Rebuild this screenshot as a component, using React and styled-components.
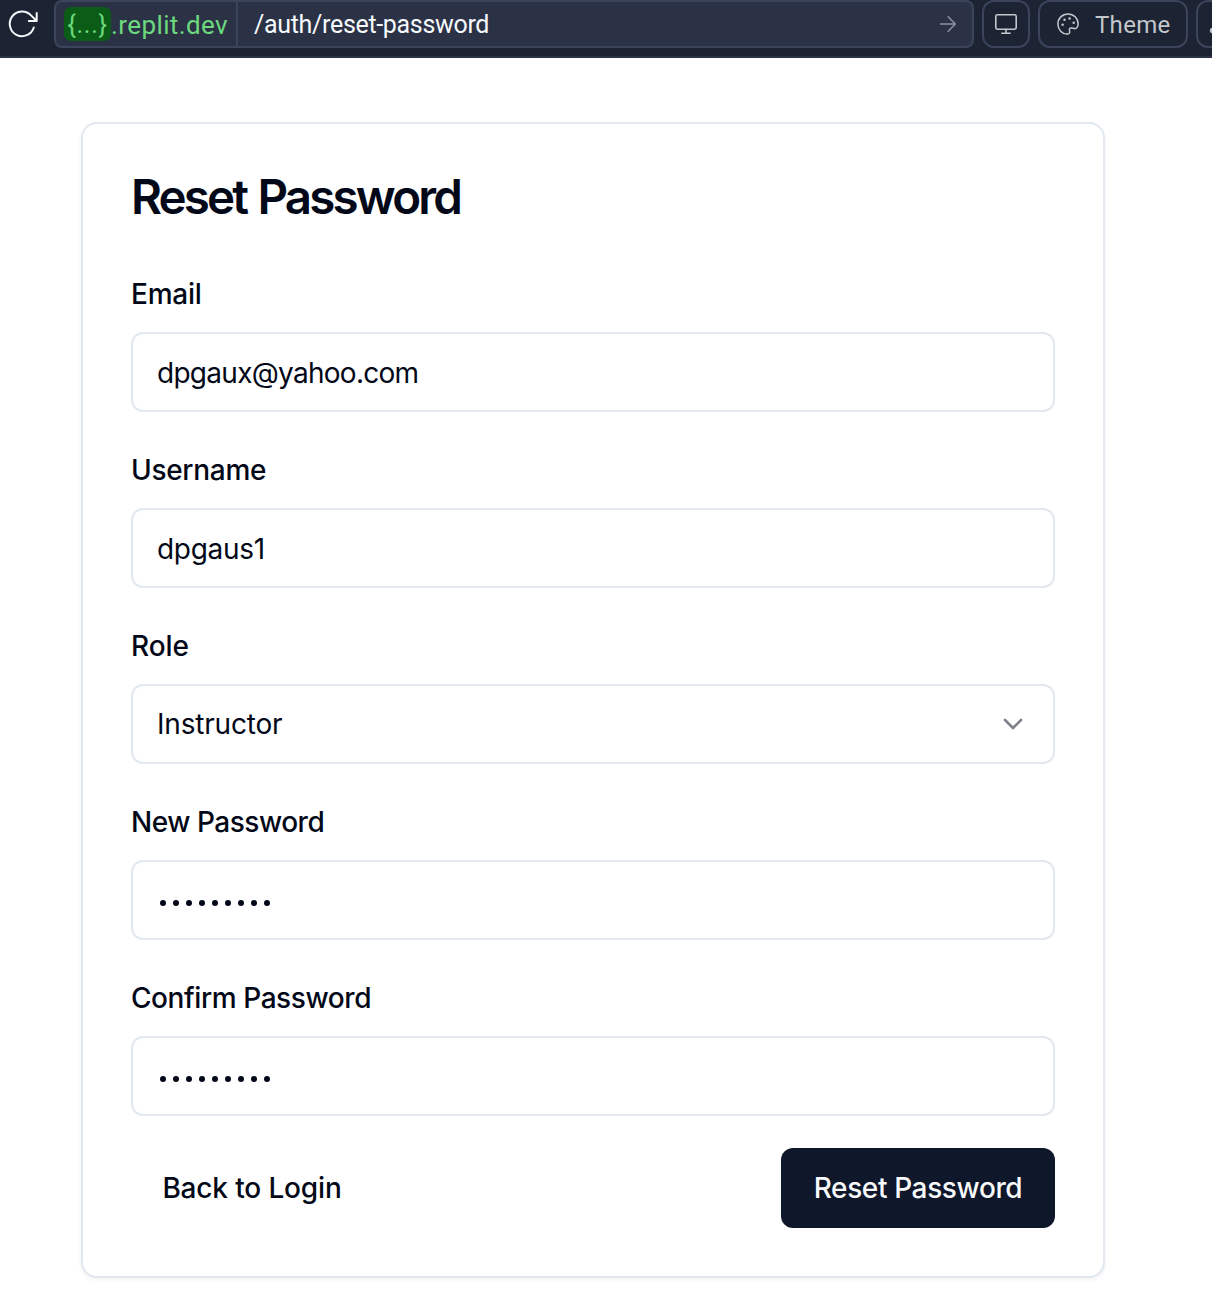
import React from "react";
import styled, { createGlobalStyle } from "styled-components";

const GlobalStyle = createGlobalStyle`
  *, *::before, *::after { box-sizing: border-box; }
  body {
    margin: 0;
    background: #ffffff;
    color: #020817;
    font-family: Inter, "Liberation Sans", sans-serif;
    overflow: hidden;
  }
`;

const Page = styled.div`
  display: flex;
  flex-direction: column;
  height: 1296px;
  overflow: hidden;
`;

const Toolbar = styled.header`
  display: flex;
  flex: none;
  gap: 8px;
  height: 58px;
  padding-bottom: 8px;
  overflow: hidden;
  background: #1c2333;
  border-bottom: 2px solid #2b3245;
`;

const ReloadButton = styled.button`
  flex: none;
  width: 46px;
  height: 48px;
  padding: 0;
  border: 0;
  background: none;
  color: #f5f9fc;
  svg { display: block; }
`;

const AddressBar = styled.div`
  display: flex;
  flex: none;
  align-items: center;
  width: 920px;
  height: 48px;
  border: 2px solid #3c445c;
  border-radius: 8px;
  background: #2b3245;
  font-family: Roboto, "Liberation Sans", sans-serif;
  font-size: 25px;
  line-height: 44px;
`;

const Host = styled.div`
  display: flex;
  align-items: center;
  width: 182px;
  height: 44px;
  padding-left: 8px;
  border-right: 2px solid #3c445c;
  color: #6cd97e;
  white-space: nowrap;
`;

const HostChip = styled.span`
  flex: none;
  width: 47px;
  height: 34px;
  border-radius: 7px;
  background: #0a5c17;
  text-align: center;
  line-height: 36px;
  letter-spacing: ${(p) => p.$spacing};
`;

const HostName = styled.span`
  padding-top: 2px;
  font-size: 26px;
  letter-spacing: ${(p) => p.$spacing};
`;

const Path = styled.div`
  flex: 1;
  padding: 2px 0 0 16px;
  color: #f5f9fc;
  letter-spacing: ${(p) => p.$spacing};
`;

const GoIcon = styled.span`
  width: 24px;
  height: 24px;
  margin-right: 12px;
  color: #8d949e;
  svg { display: block; }
`;

const ToolButton = styled.button`
  display: flex;
  flex: none;
  align-items: center;
  gap: 15px;
  width: ${(p) => p.$width}px;
  height: 48px;
  padding: 0 0 0 ${(p) => p.$inset}px;
  border: 2px solid #3c445c;
  border-radius: 12px;
  background: #1c2333;
  color: #c2c8cc;
  font: 400 24px/44px Roboto, "Liberation Sans", sans-serif;
  letter-spacing: 0.3px;
`;

const ToolLabel = styled.span`
  padding-top: 2px;
`;

const Card = styled.main`
  width: 1024px;
  height: 1156px;
  margin: 64px 0 0 81px;
  padding: 48px;
  border: 2px solid #e2e8f0;
  border-radius: 16px;
  background: #ffffff;
  box-shadow: 0 2px 4px rgba(0, 0, 0, 0.05);
`;

const Title = styled.h1`
  margin: 0 0 59px;
  padding-top: 1px;
  font-size: 47.5px;
  font-weight: 600;
  line-height: 48px;
  letter-spacing: -2.82px;
  word-spacing: 2px;
`;

const Form = styled.form`
  display: flex;
  flex-direction: column;
  gap: 44px;
`;

const Field = styled.div`
  display: flex;
  flex-direction: column;
  gap: 24px;
`;

const Label = styled.label`
  font-size: 28px;
  font-weight: 500;
  line-height: 28px;
  letter-spacing: ${(p) => p.$spacing};
`;

const Control = styled.div`
  display: flex;
  align-items: center;
  justify-content: space-between;
  height: 80px;
  padding: ${(p) => (p.$select ? "0" : "2px")} 28px 0 24px;
  border: 2px solid #e2e8f0;
  border-radius: 12px;
  font-size: 28px;
  line-height: 40px;
  letter-spacing: ${(p) => p.$spacing};
  svg { display: block; }
`;

const Dots = styled.div`
  display: flex;
  gap: 6.7px;
  padding: 4px 0 0 3px;
`;

const Dot = styled.span`
  width: 6.25px;
  height: 6.25px;
  border-radius: 50%;
  background: #020817;
`;

const Actions = styled.div`
  display: flex;
  justify-content: space-between;
  margin-top: 32px;
`;

const Button = styled.button`
  height: 80px;
  width: ${(p) => p.$width}px;
  padding: 0;
  border: 0;
  border-radius: 12px;
  background: ${(p) => (p.$primary ? "#0f172a" : "transparent")};
  color: ${(p) => (p.$primary ? "#f8fafc" : "#020817")};
  font: 500 28px/40px Inter, "Liberation Sans", sans-serif;
  letter-spacing: ${(p) => p.$spacing};
  white-space: nowrap;
`;

const ReloadIcon = () => (
  <svg width="46" height="48" fill="none" stroke="currentColor" strokeWidth="2" strokeLinecap="round" strokeLinejoin="round">
    <path d="M33.8 27.5A12.3 12.3 0 1 1 31 15.4L36.7 21M36.7 13V21H28.8" />
  </svg>
);

const ArrowIcon = () => (
  <svg width="24" height="24" fill="none" stroke="currentColor" strokeWidth="1.5" strokeLinecap="round" strokeLinejoin="round">
    <path d="M4.7 12H19.3M12.2 4.8L19.3 12L12.2 19.2" />
  </svg>
);

const MonitorIcon = () => (
  <svg width="24" height="24" fill="none" stroke="currentColor" strokeWidth="1.6" strokeLinecap="round" strokeLinejoin="round">
    <rect x="1.8" y="2.8" width="20.4" height="14.4" rx="1.6" />
    <path d="M12 17.2V21.2M7.8 21.2H16.2" />
  </svg>
);

const PaletteIcon = () => (
  <svg width="24" height="24" fill="none" stroke="currentColor" strokeWidth="1.5" strokeLinecap="round" strokeLinejoin="round">
    <path d="M12 1.9C6.2 1.9 1.9 6.5 1.9 12C1.9 17.6 6.2 22.1 11.1 22.1C13.3 22.1 14.2 20.7 13.5 18.8C12.9 16.9 14 15.7 15.8 16.1L18.3 16.6C20.6 16.9 22.1 14.6 22.1 11.9C22.1 6.4 17.6 1.9 12 1.9Z" />
    <g fill="currentColor" stroke="none">
      <circle cx="6.6" cy="12.7" r="1.25" />
      <circle cx="8.5" cy="7.7" r="1.25" />
      <circle cx="13.6" cy="6.6" r="1.25" />
      <circle cx="17.7" cy="10.8" r="1.25" />
    </g>
  </svg>
);

const ToolsIcon = () => (
  <svg width="24" height="24" fill="currentColor">
    <circle cx="4.5" cy="18.5" r="2.7" />
  </svg>
);

const ChevronIcon = () => (
  <svg width="24" height="24" fill="none" stroke="#7f828a" strokeWidth="2.6" strokeLinecap="round" strokeLinejoin="round">
    <path d="M4 8L12 16L20 8" />
  </svg>
);

const Password = ({ length }) => (
  <Dots>
    {Array.from({ length }, (_, i) => <Dot key={i} />)}
  </Dots>
);

const fields = [
  { label: "Email", labelSpacing: "-0.25px", value: "dpgaux@yahoo.com", spacing: "-0.72px" },
  { label: "Username", labelSpacing: "-0.3px", value: "dpgaus1", spacing: "-0.3px" },
  { label: "Role", labelSpacing: "-0.1px", value: "Instructor", spacing: "-0.2px", select: true },
  { label: "New Password", labelSpacing: "-0.48px", password: 9 },
  { label: "Confirm Password", labelSpacing: "-0.42px", password: 9 },
];

export default function App() {
  return (
    <Page>
      <GlobalStyle />
      <Toolbar>
        <ReloadButton aria-label="Reload"><ReloadIcon /></ReloadButton>
        <AddressBar>
          <Host>
            <HostChip $spacing="0.7px">{"{...}"}</HostChip>
            <HostName $spacing="0.4px">.replit.dev</HostName>
          </Host>
          <Path $spacing="-0.32px">/auth/reset-password</Path>
          <GoIcon><ArrowIcon /></GoIcon>
        </AddressBar>
        <ToolButton $width={48} $inset={10} aria-label="Viewport"><MonitorIcon /></ToolButton>
        <ToolButton $width={150} $inset={16}><PaletteIcon /><ToolLabel>Theme</ToolLabel></ToolButton>
        <ToolButton $width={48} $inset={10} aria-label="Developer tools"><ToolsIcon /></ToolButton>
      </Toolbar>
      <Card>
        <Title>Reset Password</Title>
        <Form>
          {fields.map((f) => (
            <Field key={f.label}>
              <Label $spacing={f.labelSpacing}>{f.label}</Label>
              <Control $spacing={f.spacing} $select={f.select}>
                {f.password ? <Password length={f.password} /> : <span>{f.value}</span>}
                {f.select && <ChevronIcon />}
              </Control>
            </Field>
          ))}
        </Form>
        <Actions>
          <Button type="button" $width={242} $spacing="-0.15px">Back to Login</Button>
          <Button type="button" $primary $width={274} $spacing="-0.38px">Reset Password</Button>
        </Actions>
      </Card>
    </Page>
  );
}
